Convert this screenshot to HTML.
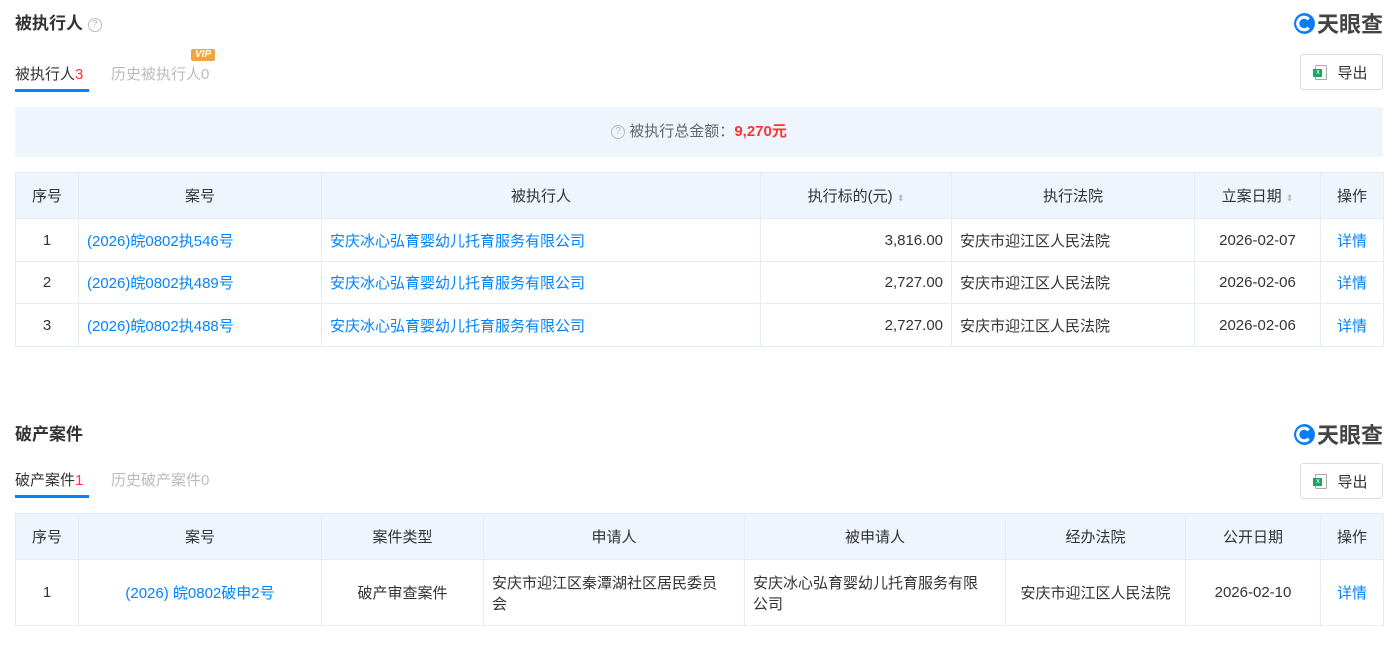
<!DOCTYPE html>
<html><head><meta charset="utf-8"><style>
*{margin:0;padding:0;box-sizing:border-box}
body{width:1395px;height:670px;background:#fff;font-family:"Liberation Sans","Noto Sans CJK SC",sans-serif;color:#333;font-size:15px;position:relative;overflow:hidden}
.abs{position:absolute}
.title{font-size:17px;font-weight:bold;color:#333}
.q{display:inline-block;width:14px;height:14px;border:1px solid #bbb;border-radius:50%;color:#bbb;font-size:10px;line-height:12px;text-align:center;font-weight:normal;vertical-align:2px}
.logo{font-size:22px;font-weight:bold;color:#444;display:flex;align-items:center;letter-spacing:0}
.tab{font-size:15px;color:#333}
.tab2{font-size:15px;color:#bbb}
.ul{height:3px;background:#0084ff;width:74px}
.btn{border:1px solid #ddd;border-radius:3px;width:83px;height:36px;display:flex;align-items:center;justify-content:center;font-size:15px;color:#333;background:#fff}
.xl{width:12px;height:15px;border:1px solid #aaa;border-radius:1px;position:relative;margin-right:10px;background:#fff}
.xl:after{content:"x";position:absolute;left:-3px;top:3px;width:9px;height:8px;background:#21a366;color:#fff;font-size:7px;line-height:8px;text-align:center}
table{border-collapse:collapse;table-layout:fixed;position:absolute;left:15px;width:1368px}
td,th{border:1px solid #e4ecf5;font-size:15px;font-weight:normal;text-align:center;padding:0 8px}
th{background:#eef5fd;height:46px;color:#333}
a{color:#0084ff;text-decoration:none}
.l{text-align:left}.r{text-align:right}
.s{color:#bbb;font-size:9px}
</style></head><body>
<div class="abs title" style="left:15px;top:9px">被执行人 <span class="q">?</span></div>
<div class="abs logo" style="left:1293px;top:7px"><svg width="23" height="23" viewBox="0 0 22 22"><circle cx="11" cy="11" r="10" fill="#0a7cf5"/><path d="M15 7a6 6 0 1 0 0 8" stroke="#fff" stroke-width="3" fill="none"/></svg><span style="margin-left:1px">天眼查</span></div>
<div class="abs tab" style="left:15px;top:63px">被执行人<span style="color:#f33">3</span></div>
<div class="abs ul" style="left:15px;top:89px"></div>
<div class="abs tab2" style="left:111px;top:63px">历史被执行人0</div>
<div class="abs" style="left:191px;top:49px;background:#f0a43a;color:#fff;font-size:10px;font-weight:bold;font-style:italic;padding:0 4px;line-height:12px;border-radius:2px">VIP</div>
<div class="abs btn" style="left:1300px;top:54px"><span class="xl"></span>导出</div>
<div class="abs" style="left:15px;top:107px;width:1368px;height:50px;background:#eef5fd;text-align:center;line-height:50px;font-size:15px;color:#666"><span class="q">?</span> 被执行总金额：<b style="color:#f33;font-size:15px">9,270元</b></div>
<table style="top:172px">
<colgroup><col style="width:63px"><col style="width:243px"><col style="width:439px"><col style="width:191px"><col style="width:243px"><col style="width:126px"><col style="width:63px"></colgroup>
<tr><th>序号</th><th>案号</th><th>被执行人</th><th>执行标的(元) <span class="s">⬍</span></th><th>执行法院</th><th>立案日期 <span class="s">⬍</span></th><th>操作</th></tr>
<tr style="height:43px"><td>1</td><td class="l"><a>(2026)皖0802执546号</a></td><td class="l"><a>安庆冰心弘育婴幼儿托育服务有限公司</a></td><td class="r">3,816.00</td><td class="l">安庆市迎江区人民法院</td><td>2026-02-07</td><td><a>详情</a></td></tr>
<tr style="height:42px"><td>2</td><td class="l"><a>(2026)皖0802执489号</a></td><td class="l"><a>安庆冰心弘育婴幼儿托育服务有限公司</a></td><td class="r">2,727.00</td><td class="l">安庆市迎江区人民法院</td><td>2026-02-06</td><td><a>详情</a></td></tr>
<tr style="height:43px"><td>3</td><td class="l"><a>(2026)皖0802执488号</a></td><td class="l"><a>安庆冰心弘育婴幼儿托育服务有限公司</a></td><td class="r">2,727.00</td><td class="l">安庆市迎江区人民法院</td><td>2026-02-06</td><td><a>详情</a></td></tr>
</table>
<div class="abs title" style="left:15px;top:420px">破产案件</div>
<div class="abs logo" style="left:1293px;top:418px"><svg width="23" height="23" viewBox="0 0 22 22"><circle cx="11" cy="11" r="10" fill="#0a7cf5"/><path d="M15 7a6 6 0 1 0 0 8" stroke="#fff" stroke-width="3" fill="none"/></svg><span style="margin-left:1px">天眼查</span></div>
<div class="abs tab" style="left:15px;top:469px">破产案件<span style="color:#f33">1</span></div>
<div class="abs ul" style="left:15px;top:495px"></div>
<div class="abs tab2" style="left:111px;top:469px">历史破产案件0</div>
<div class="abs btn" style="left:1300px;top:463px"><span class="xl"></span>导出</div>
<table style="top:513px">
<colgroup><col style="width:63px"><col style="width:243px"><col style="width:162px"><col style="width:261px"><col style="width:261px"><col style="width:180px"><col style="width:135px"><col style="width:63px"></colgroup>
<tr><th>序号</th><th>案号</th><th>案件类型</th><th>申请人</th><th>被申请人</th><th>经办法院</th><th>公开日期</th><th>操作</th></tr>
<tr style="height:66px"><td>1</td><td><a>(2026) 皖0802破申2号</a></td><td>破产审查案件</td><td class="l" style="padding-right:16px">安庆市迎江区秦潭湖社区居民委员会</td><td class="l" style="padding-right:16px">安庆冰心弘育婴幼儿托育服务有限公司</td><td>安庆市迎江区人民法院</td><td>2026-02-10</td><td><a>详情</a></td></tr>
</table>
</body></html>
